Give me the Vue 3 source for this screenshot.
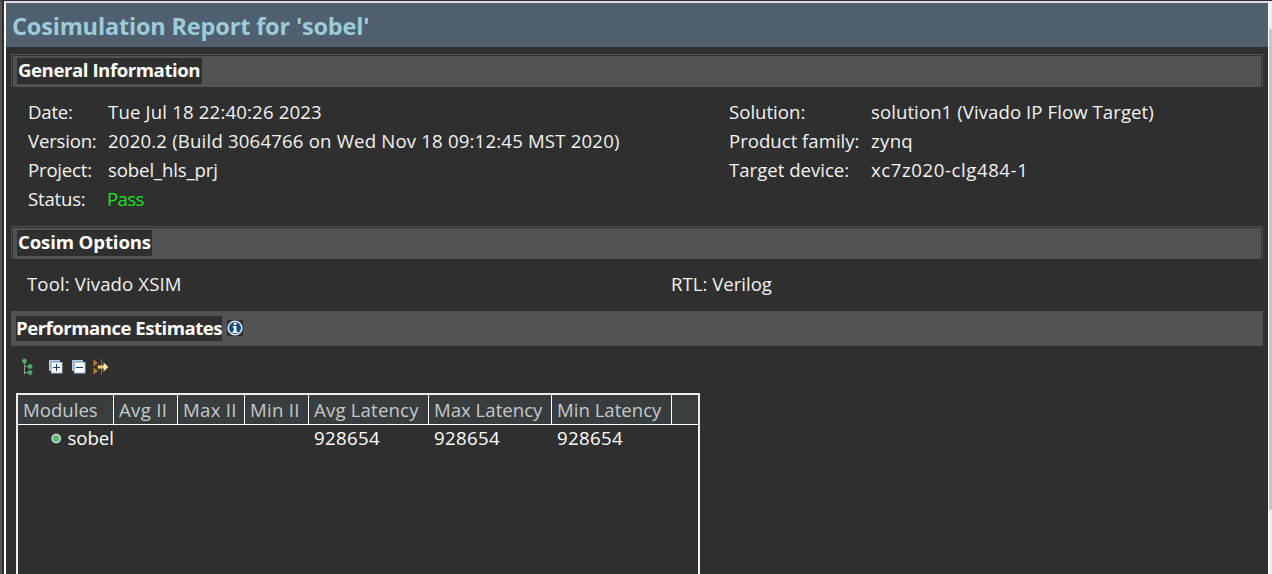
<script setup>
const left = [
  { label: 'Date:', value: 'Tue Jul 18 22:40:26 2023', cls: 'date' },
  { label: 'Version:', value: '2020.2 (Build 3064766 on Wed Nov 18 09:12:45 MST 2020)', cls: 'version' },
  { label: 'Project:', value: 'sobel_hls_prj', cls: 'project' },
  { label: 'Status:', value: 'Pass', cls: 'pass' }
]
const right = [
  { label: 'Solution:', value: 'solution1 (Vivado IP Flow Target)', cls: 'solution' },
  { label: 'Product family:', value: 'zynq', cls: 'family' },
  { label: 'Target device:', value: 'xc7z020-clg484-1', cls: 'device' }
]
const columns = ['Modules', 'Avg II', 'Max II', 'Min II', 'Avg Latency', 'Max Latency', 'Min Latency', '']
const cells = ['', '', '', '928654', '928654', '928654', '']
</script>

<template>
  <div class="window">
    <main class="report">
      <h1><span>Cosimulation Report for 'sobel'</span></h1>

      <section class="bar framed general"><h2>General Information</h2></section>
      <div class="info">
        <dl class="left">
          <template v-for="r in left" :key="r.label">
            <dt>{{ r.label }}</dt><dd><span :class="r.cls">{{ r.value }}</span></dd>
          </template>
        </dl>
        <dl class="right">
          <template v-for="r in right" :key="r.label">
            <dt>{{ r.label }}</dt><dd><span :class="r.cls">{{ r.value }}</span></dd>
          </template>
        </dl>
      </div>

      <section class="bar framed cosim"><h2>Cosim Options</h2></section>
      <div class="options"><span>Tool: Vivado XSIM</span><span>RTL: Verilog</span></div>

      <section class="bar perf">
        <h2>Performance Estimates</h2>
        <svg class="info-icon" width="16" height="16" viewBox="0 0 16 16">
          <rect width="16" height="16" fill="#2f2f2f" />
          <circle cx="8" cy="8" r="6.800" fill="#14507f" stroke="#d3e8f5" stroke-width="1.600" />
          <path d="M6.800 2.800h2.600v2.200H6.800zM5.800 6h3.600v5.400h1.400V13H5.400v-1.600H6.800V7.600h-1z" fill="#fff" />
        </svg>
      </section>

      <div class="toolbar">
        <svg width="13" height="18" viewBox="0 0 13 18">
          <path d="M3.500 4v12.500M3.500 8.500H7M3.500 14.500H7" fill="none" stroke="#8c9c94" />
          <g fill="#5aae70" stroke="#3c8a56" stroke-width=".8">
            <circle cx="3.500" cy="3" r="2.200" /><circle cx="9" cy="8.500" r="2.200" /><circle cx="9" cy="14.500" r="2.200" />
          </g>
        </svg>
        <svg class="expand" width="14" height="14" viewBox="0 0 14 14">
          <path d="M.5 10.500V.5h10V3M.5 10.500H3" fill="#a9c5df" stroke="#b9cfe3" />
          <path d="M1 1h9v9H1z" fill="#91b3d0" />
          <rect x="2.500" y="2.500" width="10.500" height="10.500" fill="#fff" stroke="#a4c0da" />
          <path d="M7.500 4v7M4 7.500h7" stroke="#173f68" />
        </svg>
        <svg class="collapse" width="14" height="14" viewBox="0 0 14 14">
          <path d="M.5 10.500V.5h10V3M.5 10.500H3" fill="#a9c5df" stroke="#b9cfe3" />
          <path d="M1 1h9v9H1z" fill="#91b3d0" />
          <rect x="2.500" y="2.500" width="10.500" height="10.500" fill="#fff" stroke="#a4c0da" />
          <path d="M4 7.500h7" stroke="#173f68" />
        </svg>
        <svg class="goto" width="16" height="16" viewBox="0 0 16 16">
          <path d="M.5 .5L5 4 .5 7.500zM.5 8.500L5 12 .5 15.500z" fill="#bd7a26" />
          <path d="M8.500 0v16" stroke="#66758a" />
          <path d="M4.500 6.200h6V3.200L15.500 8l-5 4.800v-3h-6z" fill="#e9a03a" />
          <path d="M5.500 8h7M11.500 5.500L14 8l-2.500 2.500z" fill="#fff2c0" stroke="#fff2c0" stroke-width="1.200" />
        </svg>
      </div>

      <div class="table">
        <div class="row head">
          <span v-for="(c, i) in columns" :key="i" :class="{ ii: i > 0 && i < 4, avg: i === 4 }">{{ c }}</span>
        </div>
        <div class="row body">
          <span class="module">
            <svg width="11" height="11" viewBox="0 0 11 11"><circle cx="5.500" cy="5.500" r="4.400" fill="#60b37c" stroke="#d6f0dd" stroke-width="1.300" /></svg>
            sobel
          </span>
          <span v-for="(c, i) in cells" :key="i">{{ c }}</span>
        </div>
      </div>
    </main>
    <div class="scroll"><div class="thumb"></div></div>
  </div>
</template>

<style>
body { background: #2f2f2f; overflow: hidden; }
</style>

<style scoped>
* { box-sizing: border-box; }
.window {
  display: flex; width: 1272px; height: 574px; overflow: hidden;
  background: #2f2f2f; color: #f2f2f2;
  border-left: 2px solid #555; border-top: 1px solid #302d38;
  font: 18.600px/29px "Open Sans", "Noto Sans", sans-serif;
  white-space: nowrap;
}
.report {
  width: 1264px; margin-left: 2px; flex: none;
  border-left: 2px solid #fff; border-top: 2px solid #ddd;
}
h1 {
  margin: 0; height: 44px; padding-left: 6px; background: #50606f; color: #9ccbda;
  font-size: 23.500px; line-height: 47px; font-weight: 700; letter-spacing: -.17px;
}
h2 { margin: 0; background: #2f2f2f; color: #fff; font-size: 18.600px; line-height: 24px; font-weight: 700; height: 26px; }
.bar { display: flex; align-items: flex-start; background: #505355; }
.framed {
  width: 1252px; height: 33px; margin-left: 5px; padding: 3px 0 0 5px;
  border: 1px solid #505355; border-bottom: 0;
  box-shadow: inset 1px 1px #303030, inset -1px 0 #303030;
}
.general { margin-top: 7px; }
.general h2 { width: 185px; padding-left: 1px; letter-spacing: -.43px; }
.info { display: flex; height: 139px; padding: 10px 0 0 22px; }
dl { display: grid; margin: 0; grid-auto-rows: 29px; align-content: start; }
dt, dd { margin: 0; }
.left { width: 701px; grid-template-columns: 80px 1fr; }
.left dt { letter-spacing: -.2px; }
.right { grid-template-columns: 142px 1fr; }
.date { letter-spacing: .17px; }
.version { letter-spacing: .185px; }
.project { letter-spacing: -.12px; }
.pass { color: #17e617; letter-spacing: -.6px; margin-left: -1px; }
.solution { letter-spacing: .07px; }
.family { letter-spacing: .3px; }
.device { letter-spacing: .58px; }
.cosim h2 { width: 135px; padding-left: 1px; letter-spacing: -.13px; }
.options { display: flex; height: 52px; padding: 10px 0 0 21px; }
.options span:first-child { width: 644px; letter-spacing: .12px; }
.perf { width: 1252px; height: 35px; margin-left: 5px; padding: 5px 0 0 5px; }
.perf h2 { width: 206px; height: 25px; letter-spacing: -.5px; }
.info-icon { margin: 4px 0 0 5px; }
.toolbar { display: flex; align-items: center; height: 43px; padding: 0 0 1px 15px; }
.expand { margin-left: 15px; }
.collapse { margin-left: 9px; }
.goto { margin-left: 7px; }
.table { width: 684px; height: 190px; margin: 4px 0 0 10px; border: 2px solid #eee; border-bottom: 0; }
.row { display: grid; grid-template-columns: 96px 64px 67px 64px 120px 123px 120px 1fr; }
.head { height: 30px; background: #383d3f; border-bottom: 1px solid #fff; color: #c8c8c8; line-height: 29px; }
.head span { padding-left: 5px; border-right: 1px solid #fff; height: 29px; }
.head span:last-child { border-right: 0; }
.head .ii { letter-spacing: .3px; }
.head .avg { letter-spacing: .18px; }
.body { line-height: 26px; color: #fff; }
.body > span { padding-left: 5px; letter-spacing: .35px; }
.body .module { display: flex; align-items: center; padding-left: 33px; gap: 6px; letter-spacing: 0; }
.scroll { width: 4px; height: 574px; background: #eee; margin-left: 0; padding-top: 28px; border-left: 1px solid #fff; }
.thumb { height: 481px; background: #c8c8c8; }
</style>
